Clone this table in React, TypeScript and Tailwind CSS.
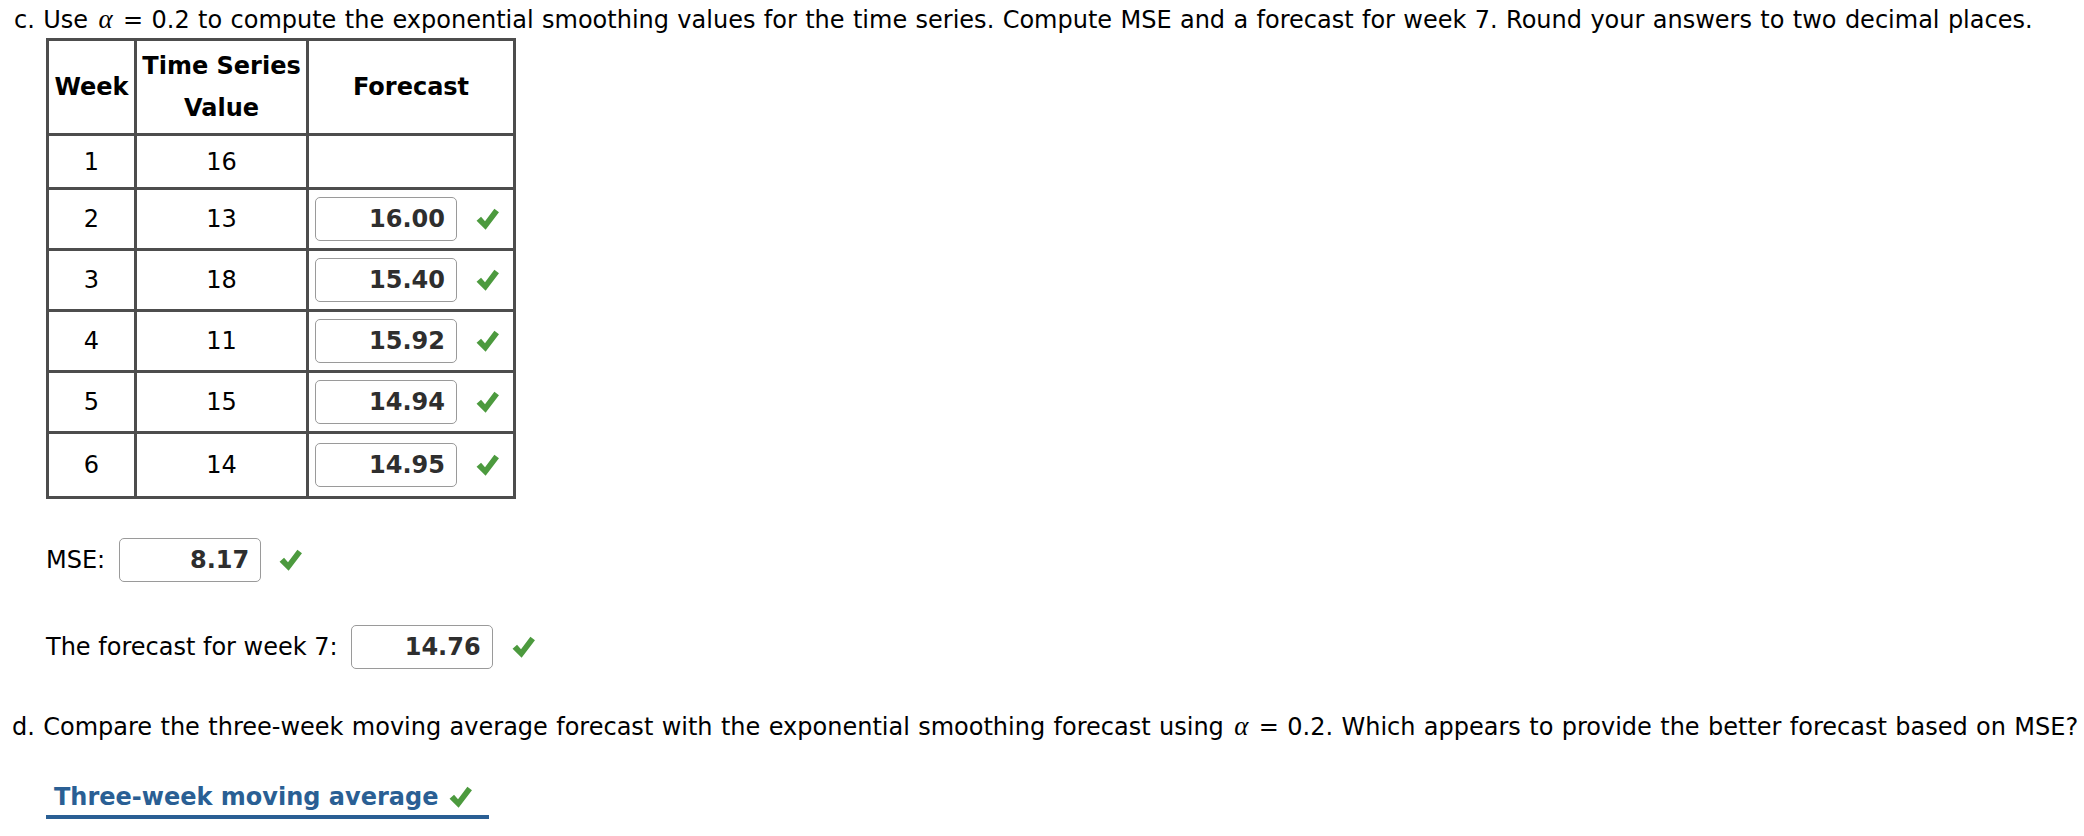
import React from "react";

const rows = [
  { week: 1, value: 16, forecast: null },
  { week: 2, value: 13, forecast: "16.00" },
  { week: 3, value: 18, forecast: "15.40" },
  { week: 4, value: 11, forecast: "15.92" },
  { week: 5, value: 15, forecast: "14.94" },
  { week: 6, value: 14, forecast: "14.95" },
];

function Check({ className = "" }: { className?: string }) {
  return (
    <svg viewBox="0 0 24 24" className={`w-[25px] h-[25px] shrink-0 ${className}`}>
      <path d="M1.5 13.2 L5.8 9.4 L9.6 13.6 L18.6 1.6 L23 5 L10.2 21.8 Z" fill="#4c9a3e" />
    </svg>
  );
}

function Answer({ value }: { value: string }) {
  return (
    <div className="w-[142px] h-[44px] border-[1.5px] border-[#9a9a9a] rounded-[5px] bg-white flex items-center justify-end pr-[11px] font-bold text-[#2e2e2e]">
      {value}
    </div>
  );
}

function Alpha() {
  return <span className="font-['Liberation_Serif',serif] italic text-[27px] px-[2px]">α</span>;
}

export default function App() {
  return (
    <div className="min-h-screen bg-white text-black font-['DejaVu_Sans',sans-serif] text-[24px] leading-[32px] pl-[12px] pt-[3px]">
      <p className="whitespace-nowrap pl-[2px] [word-spacing:0.75px]">
        c. Use <Alpha /> = 0.2 to compute the exponential smoothing values for the time series. Compute MSE and a forecast for week 7. Round your answers to two decimal places.
      </p>

      <table className="ml-[34px] mt-[2px] border-collapse border-[3px] border-[#4d4d4d]">
        <thead>
          <tr>
            <th className="w-[88px] h-[95px] border-[3px] border-[#4d4d4d] font-bold p-0">Week</th>
            <th className="w-[172px] h-[95px] border-[3px] border-[#4d4d4d] font-bold p-0 leading-[42px]">
              Time Series
              <br />
              Value
            </th>
            <th className="w-[207px] h-[95px] border-[3px] border-[#4d4d4d] font-bold p-0">Forecast</th>
          </tr>
        </thead>
        <tbody>
          {rows.map((r) => (
            <tr key={r.week}>
              <td
                className={`border-[3px] border-[#4d4d4d] text-center p-0 ${
                  r.week === 1 ? "h-[54px]" : r.week === 6 ? "h-[65px]" : "h-[61px]"
                }`}
              >
                {r.week}
              </td>
              <td className="border-[3px] border-[#4d4d4d] text-center p-0">{r.value}</td>
              <td className="border-[3px] border-[#4d4d4d] p-0 pl-[6px]">
                {r.forecast && (
                  <div className="flex items-center gap-[18px]">
                    <Answer value={r.forecast} />
                    <Check />
                  </div>
                )}
              </td>
            </tr>
          ))}
        </tbody>
      </table>

      <div className="ml-[34px] mt-[39px] flex items-center">
        <span>MSE:</span>
        <div className="ml-[14px]">
          <Answer value="8.17" />
        </div>
        <Check className="ml-[17px]" />
      </div>

      <div className="ml-[34px] mt-[43px] flex items-center">
        <span>The forecast for week 7:</span>
        <div className="ml-[13px]">
          <Answer value="14.76" />
        </div>
        <Check className="ml-[18px]" />
      </div>

      <p className="mt-[41px] whitespace-nowrap [word-spacing:0.75px]">
        d. Compare the three-week moving average forecast with the exponential smoothing forecast using <Alpha /> = 0.2. Which appears to provide the better forecast based on MSE?
      </p>

      <div className="ml-[34px] mt-[38px] w-[443px] border-b-[4px] border-[#2a5f94] pl-[8px] pb-[2px] flex items-center gap-[10px]">
        <span className="font-bold text-[#2a5f94]">Three-week moving average</span>
        <Check />
      </div>
    </div>
  );
}
